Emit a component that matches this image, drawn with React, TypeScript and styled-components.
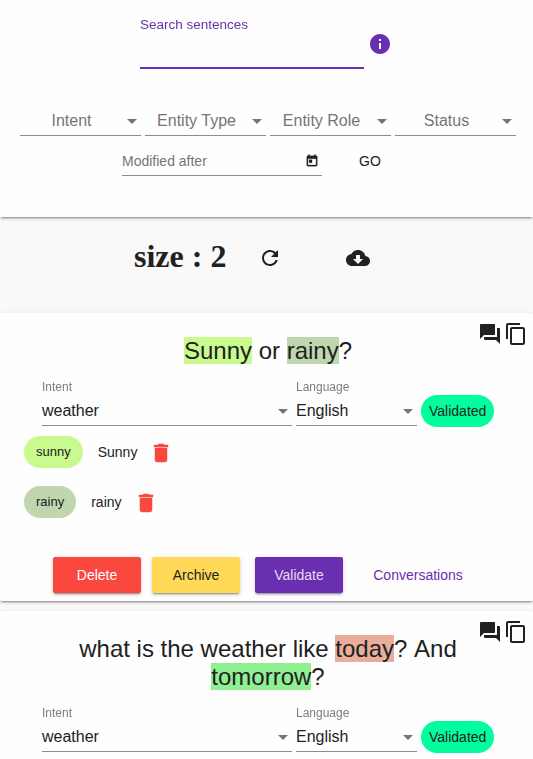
import React from "react";
import styled, { createGlobalStyle } from "styled-components";

const GlobalStyle = createGlobalStyle`
  *, *::before, *::after { box-sizing: border-box; }
  body {
    margin: 0;
    background: #f9f9f9;
    color: #212121;
    font-family: "Liberation Sans", Arial, sans-serif;
    overflow: hidden;
  }
`;

const Page = styled.main`
  display: flex;
  flex-direction: column;
  height: 759px;
  overflow: hidden;
`;

const Card = styled.section`
  flex: none;
  background: #fefefe;
  border-radius: 2px;
  box-shadow: 0 3px 1px -2px rgba(0, 0, 0, 0.2), 0 2px 2px rgba(0, 0, 0, 0.14),
    0 1px 5px rgba(0, 0, 0, 0.12);
`;

const SearchCard = styled(Card)`
  height: 217px;
  padding-top: 16px;
  border-radius: 0;
`;

const SearchRow = styled.div`
  display: flex;
  align-items: center;
  gap: 4px;
  height: 53px;
  padding-left: 140px;
`;

const SearchField = styled.label`
  width: 224px;
  height: 53px;
  border-bottom: 2px solid #6a2fb0;
  color: #6a2fb0;
`;

const FloatingLabel = styled.span<{ $size: number }>`
  display: block;
  width: max-content;
  font-size: ${(p) => p.$size}px;
  line-height: 22px;
  transform: scale(0.75) perspective(100px) translateZ(0.001px);
  transform-origin: 0 0;
`;

const InfoButton = styled.span`
  display: flex;
  margin: 3px 0 0 0.3px;
`;

const FilterRow = styled.div`
  display: flex;
  gap: 4px;
  margin: 38px 0 0 20px;
`;

const Select = styled.div<{ $width: number; $muted?: boolean }>`
  display: flex;
  align-items: center;
  width: ${(p) => p.$width}px;
  height: 29px;
  padding-right: 4px;
  border-bottom: 1px solid #8c8c8c;
  color: ${(p) => (p.$muted ? "#757575" : "#212121")};
  font-size: 16px;
  line-height: 18px;
`;

const SelectValue = styled.span<{ $center?: boolean }>`
  flex: 1;
  padding-right: ${(p) => (p.$center ? 4 : 0)}px;
  text-align: ${(p) => (p.$center ? "center" : "left")};
`;

const Caret = styled.span`
  border: 5px solid transparent;
  border-top-color: #757575;
  border-bottom-width: 0;
`;

const DateRow = styled.div`
  display: flex;
  align-items: center;
  margin: 7px 0 0 122px;
`;

const DateField = styled.div`
  display: flex;
  align-items: center;
  justify-content: space-between;
  width: 200px;
  height: 29px;
  padding-right: 3px;
  border-bottom: 1px solid #8c8c8c;
  color: #757575;
  font-size: 14px;
`;

const TextButton = styled.button<{ $accent?: boolean; $width: number }>`
  width: ${(p) => p.$width}px;
  height: 36px;
  padding: 0;
  border: 0;
  background: none;
  color: ${(p) => (p.$accent ? "#6a2fb0" : "#212121")};
  font: 14px/36px "Liberation Sans", Arial, sans-serif;
`;

const SizeBar = styled.header`
  display: flex;
  flex: none;
  align-items: center;
  height: 96px;
  padding: 0 0 14px 134px;
`;

const SizeTitle = styled.h1`
  width: 124px;
  margin: 0 0 4px;
  font: bold 32px/37px "Liberation Serif", "Times New Roman", serif;
`;

const DownloadSlot = styled.span`
  display: flex;
  margin-left: 64px;
`;

const SentenceCard = styled(Card)`
  position: relative;
  min-height: 288px;
  margin-bottom: 10px;
  padding: 24px 0 8px;
`;

const CardTools = styled.div`
  position: absolute;
  top: 9px;
  right: 5px;
  display: flex;
  gap: 2px;
`;

const Sentence = styled.p`
  width: 400px;
  margin: 0 auto;
  padding-left: 3px;
  font-size: 24px;
  font-kerning: none;
  line-height: 28px;
  text-align: center;
`;

const Mark = styled.span<{ $color: string }>`
  background: ${(p) => p.$color};
`;

const FieldRow = styled.div`
  display: flex;
  align-items: flex-end;
  gap: 4px;
  height: 62px;
  padding-left: 42px;
`;

const Field = styled.div`
  padding-bottom: 1px;
`;

const FieldLabel = styled.div`
  height: 18px;
  color: #7d7d7d;
`;

const Chip = styled.span<{ $color: string; $size?: number }>`
  height: 32px;
  padding: 0 ${(p) => (p.$size ? 8 : 12)}px;
  border-radius: 16px;
  background: ${(p) => p.$color};
  font-size: ${(p) => p.$size ?? 13}px;
  line-height: 32px;
`;

const EntityRow = styled.div`
  display: flex;
  align-items: center;
  height: 50px;
  padding-left: 24px;
`;

const EntityText = styled.span`
  margin: 0 12px 0 15px;
  font-size: 14px;
`;

const RemoveButton = styled.span`
  display: flex;
  margin-top: 2px;
`;

const Actions = styled.div`
  display: flex;
  margin: 30px 0 0 53px;
`;

const RaisedButton = styled.button<{ $bg: string; $fg: string; $gap: number }>`
  width: 88px;
  height: 36px;
  margin-right: ${(p) => p.$gap}px;
  padding: 0;
  border: 0;
  border-radius: 2px;
  background: ${(p) => p.$bg};
  color: ${(p) => p.$fg};
  font: 14px/36px "Liberation Sans", Arial, sans-serif;
  box-shadow: 0 3px 1px -2px rgba(0, 0, 0, 0.2), 0 2px 2px rgba(0, 0, 0, 0.14),
    0 1px 5px rgba(0, 0, 0, 0.12);
`;

const Svg = styled.svg`
  display: block;
  flex: none;
`;

const paths = {
  info: "M12 2C6.48 2 2 6.48 2 12s4.48 10 10 10 10-4.48 10-10S17.52 2 12 2zm1 15h-2v-6h2v6zm0-8h-2V7h2v2z",
  today:
    "M19 3h-1V1h-2v2H8V1H6v2H5c-1.11 0-1.99.9-1.99 2L3 19c0 1.1.89 2 2 2h14c1.1 0 2-.9 2-2V5c0-1.1-.9-2-2-2zm0 16H5V8h14v11zM7 10h5v5H7z",
  refresh:
    "M17.65 6.35C16.2 4.9 14.21 4 12 4c-4.42 0-7.99 3.58-7.99 8s3.57 8 7.99 8c3.73 0 6.84-2.55 7.73-6h-2.08c-.82 2.33-3.04 4-5.65 4-3.31 0-6-2.69-6-6s2.69-6 6-6c1.66 0 3.14.69 4.22 1.78L13 11h7V4l-2.35 2.35z",
  cloud:
    "M19.35 10.04C18.67 6.59 15.64 4 12 4 9.11 4 6.6 5.64 5.35 8.04 2.34 8.36 0 10.91 0 14c0 3.31 2.69 6 6 6h13c2.76 0 5-2.24 5-5 0-2.64-2.05-4.78-4.65-4.96zM17 13l-5 5-5-5h3V9h4v4h3z",
  answer:
    "M21 6h-2v9H6v2c0 .55.45 1 1 1h11l4 4V7c0-.55-.45-1-1-1zm-4 6V3c0-.55-.45-1-1-1H3c-.55 0-1 .45-1 1v14l4-4h10c.55 0 1-.45 1-1z",
  copy: "M16 1H4c-1.1 0-2 .9-2 2v14h2V3h12V1zm3 4H8c-1.1 0-2 .9-2 2v14c0 1.1.9 2 2 2h11c1.1 0 2-.9 2-2V7c0-1.1-.9-2-2-2zm0 16H8V7h11v14z",
  trash: "M6 19c0 1.1.9 2 2 2h8c1.1 0 2-.9 2-2V7H6v12zM19 4h-3.5l-1-1h-5l-1 1H5v2h14V4z",
};

interface IconProps {
  name: keyof typeof paths;
  size?: number;
  color?: string;
  weight?: number;
}

function Icon({ name, size = 24, color = "#212121", weight = 0 }: IconProps) {
  return (
    <Svg
      width={size}
      height={size}
      viewBox="0 0 24 24"
      fill={color}
      stroke={color}
      strokeWidth={weight}
    >
      <path d={paths[name]} />
    </Svg>
  );
}

interface EntityItem {
  name: string;
  color: string;
}

interface SentenceProps {
  children: React.ReactNode;
  entities?: EntityItem[];
  actions?: boolean;
}

function SentenceItem({ children, entities = [], actions }: SentenceProps) {
  return (
    <SentenceCard>
      <CardTools>
        <Icon name="answer" />
        <Icon name="copy" />
      </CardTools>
      <Sentence>{children}</Sentence>
      <FieldRow>
        <Field>
          <FieldLabel>
            <FloatingLabel $size={16}>Intent</FloatingLabel>
          </FieldLabel>
          <Select $width={250}>
            <SelectValue>weather</SelectValue>
            <Caret />
          </Select>
        </Field>
        <Field>
          <FieldLabel>
            <FloatingLabel $size={16}>Language</FloatingLabel>
          </FieldLabel>
          <Select $width={121}>
            <SelectValue>English</SelectValue>
            <Caret />
          </Select>
        </Field>
        <Chip $color="#00ff9c" $size={14}>
          Validated
        </Chip>
      </FieldRow>
      {entities.map((e) => (
        <EntityRow key={e.name}>
          <Chip $color={e.color}>{e.name.toLowerCase()}</Chip>
          <EntityText>{e.name}</EntityText>
          <RemoveButton>
            <Icon name="trash" color="#fb483f" weight={0.5} />
          </RemoveButton>
        </EntityRow>
      ))}
      {actions && (
        <Actions>
          <RaisedButton $bg="#fb483f" $fg="#ffffff" $gap={11}>
            Delete
          </RaisedButton>
          <RaisedButton $bg="#ffd858" $fg="#212121" $gap={15}>
            Archive
          </RaisedButton>
          <RaisedButton $bg="#6a2fb0" $fg="#e5d9f1" $gap={15}>
            Validate
          </RaisedButton>
          <TextButton $accent $width={120}>
            Conversations
          </TextButton>
        </Actions>
      )}
    </SentenceCard>
  );
}

export default function App() {
  return (
    <Page>
      <GlobalStyle />
      <SearchCard>
        <SearchRow>
          <SearchField>
            <FloatingLabel $size={18}>Search sentences</FloatingLabel>
          </SearchField>
          <InfoButton>
            <Icon name="info" color="#6a2fb0" />
          </InfoButton>
        </SearchRow>
        <FilterRow>
          {["Intent", "Entity Type", "Entity Role", "Status"].map((label) => (
            <Select key={label} $width={121} $muted>
              <SelectValue $center>{label}</SelectValue>
              <Caret />
            </Select>
          ))}
        </FilterRow>
        <DateRow>
          <DateField>
            Modified after
            <Icon name="today" size={14} weight={0.5} />
          </DateField>
          <TextButton $width={96}>GO</TextButton>
        </DateRow>
      </SearchCard>
      <SizeBar>
        <SizeTitle>size : 2</SizeTitle>
        <Icon name="refresh" />
        <DownloadSlot>
          <Icon name="cloud" />
        </DownloadSlot>
      </SizeBar>
      <SentenceItem
        actions
        entities={[
          { name: "Sunny", color: "#c8fa8e" },
          { name: "rainy", color: "#bfd6ae" },
        ]}
      >
        <Mark $color="#c8fa8e">Sunny</Mark> or <Mark $color="#bfd6ae">rainy</Mark>?
      </SentenceItem>
      <SentenceItem>
        what is the weather like <Mark $color="#eaad9c">today</Mark>? And{" "}
        <Mark $color="#8ef093">tomorrow</Mark>?
      </SentenceItem>
    </Page>
  );
}
